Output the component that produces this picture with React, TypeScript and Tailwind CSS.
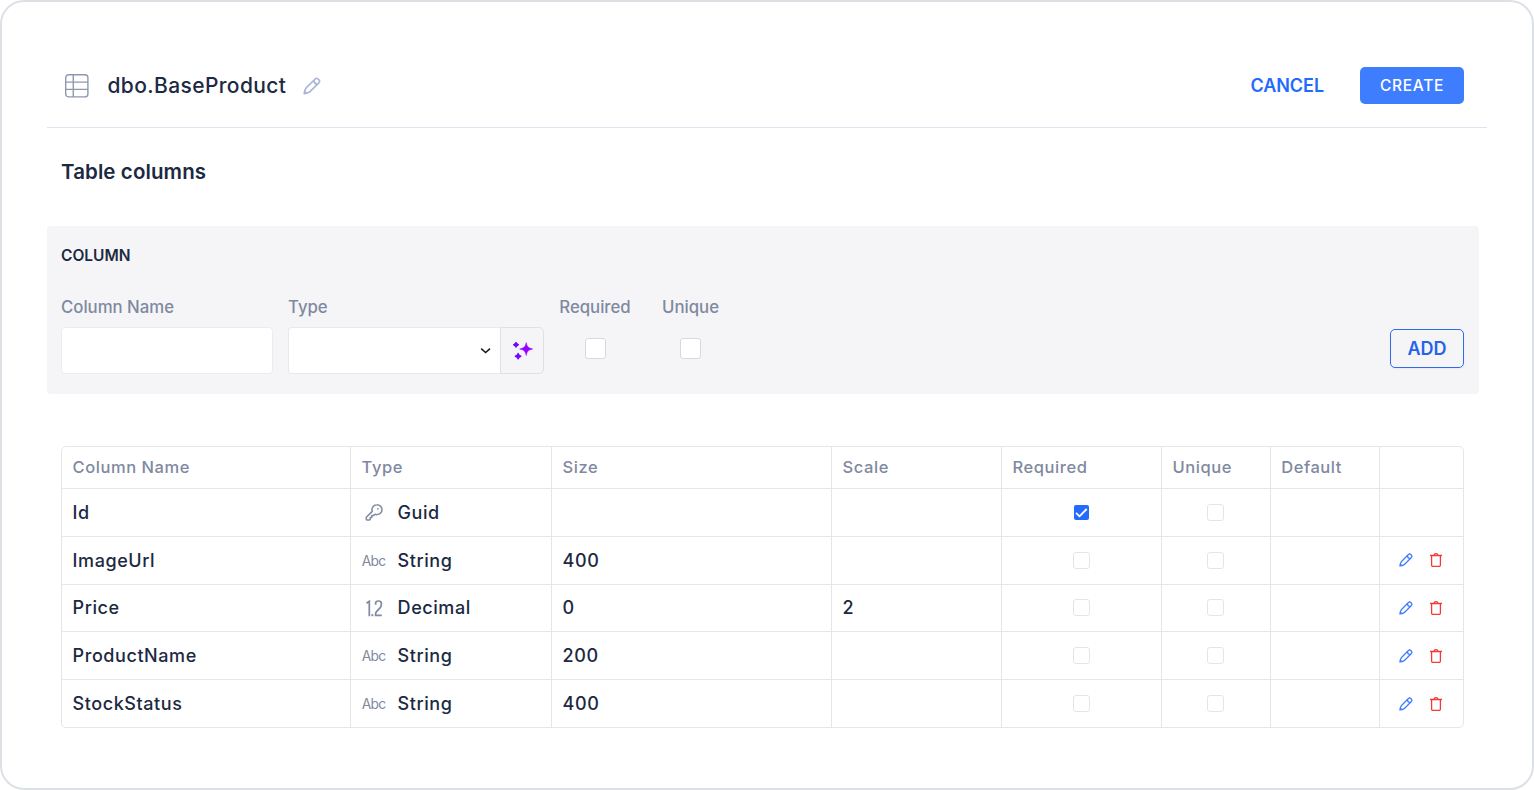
import React from "react";

type Kind = "guid" | "string" | "decimal";

interface Column {
  name: string;
  kind: Kind;
  type: string;
  size?: string;
  scale?: string;
  required?: boolean;
  locked?: boolean;
}

const columns: Column[] = [
  { name: "Id", kind: "guid", type: "Guid", required: true, locked: true },
  { name: "ImageUrl", kind: "string", type: "String", size: "400" },
  { name: "Price", kind: "decimal", type: "Decimal", size: "0", scale: "2" },
  { name: "ProductName", kind: "string", type: "String", size: "200" },
  { name: "StockStatus", kind: "string", type: "String", size: "400" },
];

const headings = ["Column Name", "Type", "Size", "Scale", "Required", "Unique", "Default", ""];

function TableIcon() {
  return (
    <svg className="size-6" viewBox="0 0 24 24" fill="none" stroke="#8f98ae" strokeWidth="1.4">
      <rect x="0.7" y="0.7" width="22.2" height="22.2" rx="3" />
      <path d="M8.3 1v22M1 8.1h22M1 15.4h22" />
    </svg>
  );
}

function PencilIcon({ className }: { className: string }) {
  return (
    <svg
      className={className}
      viewBox="0 0 18 18"
      fill="none"
      stroke="currentColor"
      strokeWidth="1.65"
      strokeLinejoin="round"
      strokeLinecap="round"
    >
      <path d="M12.1 2 3.2 10.9C2.2 11.9 1.6 14.3 1.2 16.7c2.4-.4 4.8-1 5.8-2L15.9 5.8a2.2 2.2 0 0 0 0-3l-.8-.8a2.2 2.2 0 0 0-3 0Z" />
      <path d="M10.9 3.6c.1 2.2 1.3 3.4 3.5 3.5" />
      <path d="M1.6 14.7c.9.2 1.4.8 1.6 1.6" />
    </svg>
  );
}

function TrashIcon() {
  return (
    <svg className="h-[14px] w-3" viewBox="0 0 12 14" fill="none" stroke="#f03a3a" strokeWidth="1.3">
      <path d="M0 2.5h12" />
      <path d="M4.2 2.4c0-1.2.6-1.7 1.8-1.7s1.8.5 1.8 1.7" />
      <path d="M1.6 2.8v9.5c0 .7.3 1 1 1h6.8c.7 0 1-.3 1-1V2.8" />
    </svg>
  );
}

function SparkleIcon() {
  return (
    <svg className="mt-px ml-px h-[19px] w-5" viewBox="0 0 20 19">
      <path
        d="M13.2.6c1 4.300 2.100 5.400 6.500 6.400-4.400 1-5.500 2.200-6.500 6.500-.9-4.300-2.100-5.500-6.500-6.500 4.400-1 5.600-2.100 6.500-6.400Z"
        fill="#9500ff"
        stroke="#9500ff"
        strokeWidth=".5"
        strokeLinejoin="round"
      />
      <path
        d="M3 .5c.4 1.400.8 1.800 2.300 2.200C3.800 3.100 3.400 3.500 3 5 2.600 3.500 2.200 3.100.7 2.700 2.200 2.300 2.600 1.900 3 .5Z"
        fill="#6a08ff"
        stroke="#6a08ff"
        strokeWidth="1.4"
        strokeLinejoin="round"
      />
      <path
        d="M5.100 11.600c.4 1.700 1 2.200 2.700 2.600-1.700.4-2.300.9-2.700 2.600-.4-1.700-1-2.200-2.700-2.600 1.700-.4 2.300-.9 2.700-2.600Z"
        fill="#7206ff"
        stroke="#7206ff"
        strokeWidth="1.5"
        strokeLinejoin="round"
      />
    </svg>
  );
}

function KeyIcon() {
  return (
    <svg
      className="h-[17px] w-[18px]"
      viewBox="0 0 18 17"
      fill="none"
      stroke="#7f899f"
      strokeWidth="1.5"
      strokeLinejoin="round"
      strokeLinecap="round"
    >
      <path d="M11.9.8a4.900 4.900 0 0 1 .3 9.800c-.8.1-1.600 0-2.300-.3L8.600 11.600H6.800v1.900H5.200v1.700c0 .4-.3.700-.7.700H2c-.4 0-.7-.3-.7-.7v-2l6-5.800a4.900 4.900 0 0 1 4.600-6.600Z" />
      <circle cx="12.9" cy="4.8" r=".9" fill="#7f899f" stroke="none" />
    </svg>
  );
}

function DecimalIcon() {
  return (
    <svg
      className="ml-px h-[17px] w-[17px]"
      viewBox="0 0 17 17"
      fill="none"
      stroke="#7f899f"
      strokeWidth="1.7"
    >
      <path d="M.5 3.2 3.3 1.3V16.2" />
      <path d="M6.3 14.2v2" strokeWidth="1.9" />
      <path d="M9.6 4.800V3.300c0-1.500.8-2.300 2.800-2.300s2.900.8 2.900 2.300v1.500c0 1.400-.5 2.200-1.300 3.100l-3.300 3.500c-.8.9-1.100 1.600-1.100 2.500v1.500h6.200" />
    </svg>
  );
}

function TypeIcon({ kind }: { kind: Kind }) {
  if (kind === "guid") return <KeyIcon />;
  if (kind === "decimal") return <DecimalIcon />;
  return <span className="text-[13.8px] font-normal tracking-[-0.75px] text-[#7f899f]">Abc</span>;
}

function Box({ checked = false }: { checked?: boolean }) {
  if (checked) {
    return (
      <span className="flex size-[15px] items-center justify-center rounded-[2px] bg-[#246bfd]">
        <svg className="size-[15px]" viewBox="0 0 15 15" fill="none" stroke="#fff" strokeWidth="1.8">
          <path d="m2 7.9 3.5 3.4 7.200-7.300" />
        </svg>
      </span>
    );
  }
  return <span className="size-[17px] rounded-[3px] border border-[#e4e5ea] bg-white" />;
}

const headCell = "flex items-center border-r border-b border-[#e5e6eb] pl-[10.6px]";
const cell = "flex items-center border-r border-b border-[#e5e6eb] pt-[1.2px] pl-[10.6px]";
const boxCell = "flex items-center justify-center border-r border-b border-[#e5e6eb]";
const grid = "grid grid-cols-[289px_201px_280px_170px_160px_108.6px_109px_1fr]";
const label = "text-[16.8px] leading-5 tracking-[-0.02px] text-[#7f899f]";

export default function App() {
  return (
    <main className="h-[790px] w-[1534px] bg-white font-['Inter',sans-serif] font-medium text-[#1c2942]">
      <div className="h-[790px] rounded-[24px] border-2 border-[#dde1e6] px-[45px]">
        <header className="flex h-[126px] items-start border-b border-[#e0e4ee] pt-[65px] pr-[23px] pl-[17.5px]">
          <div className="flex h-[37px] items-center">
            <TableIcon />
            <h1 className="ml-[19px] text-[21px] tracking-[0.38px]">dbo.BaseProduct</h1>
            <PencilIcon className="ml-[17px] size-[18px] text-[#a9b6d6]" />
          </div>
          <div className="ml-auto flex items-center">
            <button className="text-[18px] font-semibold tracking-[-0.06px] text-[#246bfd]">CANCEL</button>
            <button className="ml-9 h-[37px] w-[104px] rounded-[5px] bg-[#3f7dff] text-[15.5px] tracking-[0.7px] text-white">
              CREATE
            </button>
          </div>
        </header>

        <h2 className="mt-[30px] pl-3.5 text-[20.5px] leading-7 font-semibold tracking-[0.1px]">Table columns</h2>

        <section className="mt-10 mr-2 h-[168px] rounded-[4px] bg-[#f5f5f8] pt-5 pr-[15px] pl-3.5">
          <h3 className="text-[15.5px] leading-5 font-semibold">COLUMN</h3>
          <div className="mt-[31px] flex">
            <div className="w-[212px]">
              <div className={label}>Column Name</div>
              <div className="mt-[10px] h-[47px] rounded-[4px] border border-[#ececee] bg-white" />
            </div>
            <div className="ml-[15px] w-[256px]">
              <div className={label}>Type</div>
              <div className="mt-[10px] flex h-[47px]">
                <div className="flex flex-1 items-center justify-end rounded-l-[4px] border border-r-0 border-[#e9e9ed] bg-white pr-[9px]">
                  <svg className="h-[7px] w-[11px]" viewBox="0 0 11 7" fill="none" stroke="#17191e" strokeWidth="1.5">
                    <path d="M1.200 1.600 5.600 5.600 10 1.600" />
                  </svg>
                </div>
                <div className="flex w-11 items-center justify-center rounded-r-[5px] border border-[#dfe0e6]">
                  <SparkleIcon />
                </div>
              </div>
            </div>
            <div className="ml-[15px] flex w-[72px] flex-col items-center">
              <div className={label}>Required</div>
              <div className="mt-[21px] size-[21px] rounded-[3px] border border-[#d9d9dd] bg-white" />
            </div>
            <div className="ml-[30px] flex w-[59px] flex-col items-center">
              <div className={label}>Unique</div>
              <div className="mt-[21px] size-[21px] rounded-[3px] border border-[#d9d9dd] bg-white" />
            </div>
            <button className="mt-8 ml-auto h-[39px] w-[74px] rounded-[5px] border-[1.5px] border-[#2f6bea] text-[18px] font-semibold tracking-[-0.1px] text-[#2563eb] shadow-xs">
              ADD
            </button>
          </div>
        </section>

        <div className="mt-[52px] ml-3.5 w-[1403px] overflow-hidden rounded-[5px] border border-[#e5e6eb]">
          <div className={grid}>
            {headings.map((h, i) => (
              <div
                key={i}
                className={`${headCell} h-[42px] text-[16.5px] tracking-[0.55px] text-[#7f899f] last:border-r-0`}
              >
                {h}
              </div>
            ))}
          </div>
          {columns.map((c) => (
            <div
              key={c.name}
              className={`${grid} h-[47.75px] text-[18px] leading-6 tracking-[0.57px] last:h-[47px] last:*:border-b-0`}
            >
              <div className={cell}>{c.name}</div>
              <div className={cell}>
                <span className="flex w-6 justify-center">
                  <TypeIcon kind={c.kind} />
                </span>
                <span className="ml-3">{c.type}</span>
              </div>
              <div className={cell}>{c.size}</div>
              <div className={cell}>{c.scale}</div>
              <div className={boxCell}>
                <Box checked={c.required} />
              </div>
              <div className={boxCell}>
                <Box />
              </div>
              <div className={cell} />
              <div className="flex items-center border-b border-[#e5e6eb] pl-[19px]">
                {!c.locked && (
                  <>
                    <PencilIcon className="size-[14px] text-[#3f7dff]" />
                    <span className="ml-[17.5px]">
                      <TrashIcon />
                    </span>
                  </>
                )}
              </div>
            </div>
          ))}
        </div>
      </div>
    </main>
  );
}
